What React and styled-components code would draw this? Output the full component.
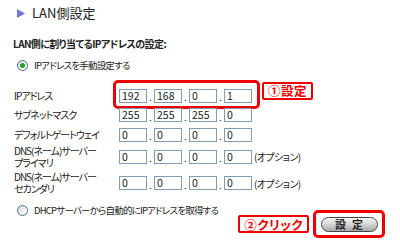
import React from "react";
import styled, { createGlobalStyle } from "styled-components";

const GlobalStyle = createGlobalStyle`
    html, body {
        margin: 0;
        padding: 0;
        background: #fff;
    }
    body {
        width: 400px;
        height: 244px;
        overflow: hidden;
        font-family: "Noto Sans CJK JP", "Liberation Sans", sans-serif;
        font-feature-settings: "palt";
        color: #222;
    }
`;

const Page = styled.div`
    padding: 6px 15px 0 13px;
`;

const Title = styled.div`
    display: flex;
    align-items: center;
    gap: 7px;
    padding-left: 4px;
    font-size: 13px;
    line-height: 14px;
    height: 14px;
`;

const Heading = styled.div`
    margin-top: 17px;
    font-size: 10px;
    letter-spacing: -0.6px;
    font-weight: bold;
    line-height: 14px;
`;

const RadioRow = styled.label`
    display: flex;
    align-items: center;
    gap: 6px;
    padding-left: 4px;
    margin-top: ${(p) => p.$top}px;
    font-size: 9.5px;
    letter-spacing: -0.8px;
    line-height: 14px;
`;

const Radio = styled.span`
    position: relative;
    width: 9px;
    height: 9px;
    border-radius: 50%;
    border: 1px solid #4a6f9a;
    background: linear-gradient(135deg, #dcdcd6, #fff);
    &::after {
        content: "";
        display: ${(p) => (p.$checked ? "block" : "none")};
        position: absolute;
        left: 2px;
        top: 2px;
        width: 5px;
        height: 5px;
        border-radius: 50%;
        background: #21a121;
    }
`;

const Form = styled.div`
    margin-top: 14px;
    padding-left: 1px;
    display: flex;
    flex-direction: column;
`;

const Row = styled.div`
    display: flex;
    align-items: center;
    min-height: ${(p) => p.$h}px;
`;

const Label = styled.div`
    width: 105px;
    font-size: 10px;
    letter-spacing: -1px;
    line-height: 12px;
`;

const Fields = styled.div`
    position: relative;
    display: flex;
    align-items: center;

    &::before {
        content: "";
        display: ${(p) => (p.$marked ? "block" : "none")};
        position: absolute;
        left: -6px;
        right: -8px;
        top: -7px;
        bottom: -5px;
        border: 3px solid #ee0000;
        border-radius: 5px;
    }
`;

const Octet = styled.div`
    box-sizing: border-box;
    width: 28px;
    height: 14px;
    border: 1px solid #7f9db9;
    padding: 0 2px;
    font-size: 10.5px;
    line-height: 12px;
    background: #fff;
`;

const Dot = styled.span`
    width: 7px;
    text-align: center;
    font-size: 10px;
    line-height: 14px;
    padding-top: 3px;
`;

const Note = styled.span`
    margin-left: 2px;
    font-size: 10px;
    letter-spacing: -0.6px;
`;

const Callout = styled.div`
    box-sizing: border-box;
    display: flex;
    align-items: center;
    justify-content: center;
    height: ${(p) => p.$h}px;
    padding: 0 4px;
    border: 2px solid #ee0000;
    border-radius: 2px;
    background: #fff;
    color: #ee0000;
    font-size: 12.5px;
    font-weight: bold;
    letter-spacing: 0.5px;
`;

const StepOne = styled(Callout)`
    margin-left: 10px;
    margin-top: -10px;
`;

const Actions = styled.div`
    display: flex;
    justify-content: flex-end;
    align-items: center;
    gap: 4px;
    margin-top: -7px;
`;

const ButtonFrame = styled.div`
    box-sizing: border-box;
    width: 72px;
    height: 28px;
    display: flex;
    align-items: center;
    justify-content: center;
    border: 3px solid #ee0000;
    border-radius: 5px;
`;

const Button = styled.button`
    width: 57px;
    height: 15px;
    padding: 0;
    border: 1px solid #444;
    border-radius: 8px;
    background: linear-gradient(#f4f4f4 0%, #d8d8d8 45%, #a9a9a9 100%);
    box-shadow: inset 0 1px 0 #fff;
    font-family: "Noto Sans CJK JP", sans-serif;
    font-size: 11px;
    font-weight: bold;
    line-height: 13px;
    letter-spacing: 6px;
    text-indent: 6px;
    color: #222;
`;

const Triangle = () => (
    <svg width="8" height="9" viewBox="0 0 8 9">
        <polygon points="0,0 8,4.5 0,9" fill="#7272d8" />
    </svg>
);

const rows = [
    { label: ["IPアドレス"], values: ["192", "168", "0", "1"], marked: true, h: 19 },
    { label: ["サブネットマスク"], values: ["255", "255", "255", "0"], h: 20 },
    { label: ["デフォルトゲートウェイ"], values: ["0", "0", "0", "0"], h: 19 },
    { label: ["DNS(ネーム)サーバー", "プライマリ"], values: ["0", "0", "0", "0"], note: true, h: 25 },
    { label: ["DNS(ネーム)サーバー", "セカンダリ"], values: ["0", "0", "0", "0"], note: true, h: 28 },
];

const App = () => (
    <>
        <GlobalStyle />
        <Page>
            <Title>
                <Triangle />
                <span>LAN側設定</span>
            </Title>
            <Heading>LAN側に割り当てるIPアドレスの設定:</Heading>
            <RadioRow $top={7}>
                <Radio $checked />
                IPアドレスを手動設定する
            </RadioRow>
            <Form>
                {rows.map((r, i) => (
                    <Row key={i} $h={r.h}>
                        <Label>
                            {r.label.map((l) => (
                                <div key={l}>{l}</div>
                            ))}
                        </Label>
                        <Fields $marked={r.marked}>
                            {r.values.map((v, j) => (
                                <React.Fragment key={j}>
                                    {j > 0 && <Dot>.</Dot>}
                                    <Octet>{v}</Octet>
                                </React.Fragment>
                            ))}
                        </Fields>
                        {r.note && <Note>(オプション)</Note>}
                        {r.marked && <StepOne $h={18}>①設定</StepOne>}
                    </Row>
                ))}
            </Form>
            <RadioRow $top={6}>
                <Radio />
                DHCPサーバーから自動的にIPアドレスを取得する
            </RadioRow>
            <Actions>
                <Callout $h={18}>②クリック</Callout>
                <ButtonFrame>
                    <Button>設定</Button>
                </ButtonFrame>
            </Actions>
        </Page>
    </>
);

export default App;
